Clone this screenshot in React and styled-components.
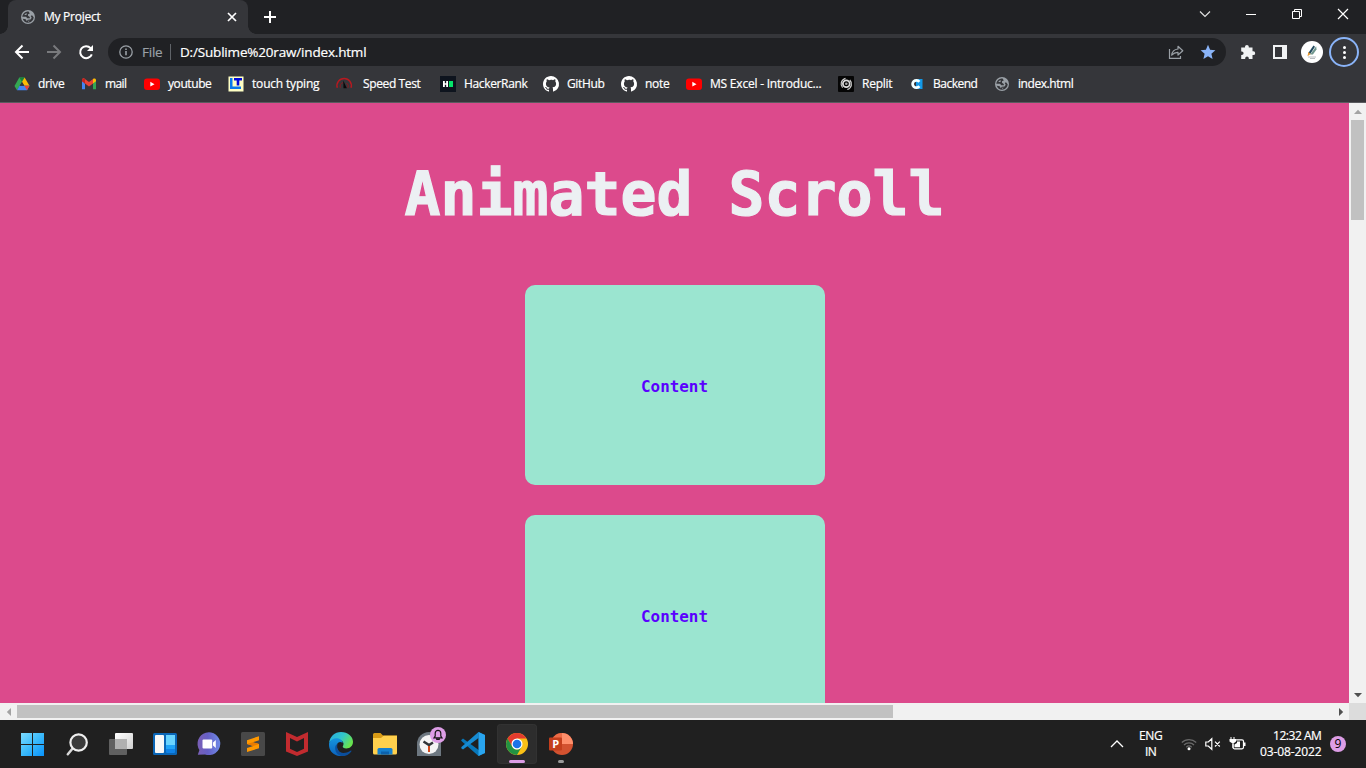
import React, { useLayoutEffect, useRef, useState } from "react";
import styled, { createGlobalStyle } from "styled-components";

const GlobalStyle = createGlobalStyle`
  * { box-sizing: border-box; }
  body {
    margin: 0;
    overflow: hidden;
    font-family: "Open Sans", "Noto Sans", sans-serif;
    font-size: 12px;
    color: #fff;
  }
  svg { display: block; flex: none; overflow: visible; }
`;

const Screen = styled.div`
  width: 1366px;
  height: 768px;
  display: flex;
  flex-direction: column;
  overflow: hidden;
  background: #202124;
`;

/* ---------- fitted text ---------- */
const TextLine = styled.span`
  display: block;
  flex: none;
  white-space: pre;
  width: ${(p) => p.$width}px;
  font-size: ${(p) => p.$size || 12}px;
  line-height: 16px;
  color: ${(p) => p.$color || "#fff"};
  -webkit-text-stroke: 0.2px currentColor;
`;

function Label({ width, size, color, children }) {
  const ref = useRef(null);
  const [spacing, setSpacing] = useState(0);
  useLayoutEffect(() => {
    const natural = ref.current.getBoundingClientRect().width;
    setSpacing((width - 0.6 - natural) / String(children).length);
  }, [width, children]);
  return (
    <TextLine $width={width} $size={size} $color={color}>
      <span ref={ref} style={{ letterSpacing: spacing }}>{children}</span>
    </TextLine>
  );
}

/* ---------- tab strip ---------- */
const TabStrip = styled.div`
  height: 34px;
  flex: none;
  display: flex;
  align-items: stretch;
  padding-left: 8px;
  background: #202124;
`;

const Tab = styled.div`
  position: relative;
  width: 240px;
  display: flex;
  align-items: center;
  padding: 0 9px 0 12px;
  background: #35363a;
  border-radius: 8px 8px 0 0;
  &::before,
  &::after {
    content: "";
    position: absolute;
    bottom: 0;
    width: 8px;
    height: 8px;
  }
  &::before {
    left: -8px;
    background: radial-gradient(circle at 0 0, #202124 7.5px, #35363a 8px);
  }
  &::after {
    right: -8px;
    background: radial-gradient(circle at 100% 0, #202124 7.5px, #35363a 8px);
  }
`;

const TabTitle = styled.div`
  flex: 1;
  padding-left: 8px;
`;

const NewTab = styled.div`
  display: flex;
  align-items: center;
  padding-left: 16px;
`;

const WindowControls = styled.div`
  margin-left: auto;
  display: flex;
  height: 28px;
`;

const WindowButton = styled.div`
  width: 46px;
  display: flex;
  align-items: center;
  justify-content: center;
`;

/* ---------- toolbar ---------- */
const Toolbar = styled.div`
  height: 36px;
  flex: none;
  display: flex;
  align-items: center;
  background: #35363a;
`;

const NavButtons = styled.div`
  width: 108px;
  display: flex;
  gap: 16px;
  padding-left: 14px;
`;

const AddressBar = styled.div`
  width: 1118px;
  height: 28px;
  border-radius: 14px;
  display: flex;
  align-items: center;
  padding: 0 10px;
  background: #202124;
`;

const Divider = styled.div`
  width: 1px;
  height: 16px;
  margin: 0 9px 0 7px;
  background: #5f6368;
`;

const SchemeLabel = styled.div`
  padding-left: 8px;
`;

const AddressActions = styled.div`
  margin-left: auto;
  display: flex;
  align-items: center;
  gap: 16px;
`;

const ToolbarActions = styled.div`
  flex: 1;
  display: flex;
  align-items: center;
  padding-left: 13px;
`;

const ActionSlot = styled.div`
  width: 32px;
  display: flex;
  justify-content: center;
  margin-left: ${(p) => p.$before || 0}px;
`;

const PageAvatar = styled.div`
  width: 22px;
  height: 22px;
  border-radius: 50%;
  background: #fff;
  display: flex;
  align-items: center;
  justify-content: center;
`;

const MenuRing = styled.div`
  width: 30px;
  height: 30px;
  flex: none;
  border-radius: 50%;
  border: 2px solid #8ab4f8;
  display: flex;
  flex-direction: column;
  align-items: center;
  justify-content: center;
  gap: 2px;
`;

const Dot = styled.i`
  width: 3px;
  height: 3px;
  border-radius: 50%;
  background: #fff;
`;

/* ---------- bookmarks ---------- */
const Bookmarks = styled.div`
  height: 33px;
  flex: none;
  display: flex;
  padding: 6px 0 0 14px;
  background: #35363a;
  border-bottom: 1px solid #5a5b5f;
`;

const Bookmark = styled.div`
  width: ${(p) => p.$cell}px;
  height: 16px;
  flex: none;
  display: flex;
  align-items: center;
  gap: 8px;
`;

/* ---------- page ---------- */
const Viewport = styled.div`
  height: 617px;
  flex: none;
  display: grid;
  grid-template-columns: 1349px 17px;
  grid-template-rows: 600px 17px;
`;

const Page = styled.main`
  overflow: hidden;
  background: #dc4a8c;
  display: flex;
  flex-direction: column;
  align-items: center;
`;

const Title = styled.h1`
  margin: 51px 0;
  font: bold 59.8px/80px "DejaVu Sans Mono", monospace;
  color: #ecf0f3;
  white-space: pre;
  -webkit-text-stroke: 1.2px currentColor;
`;

const Card = styled.section`
  width: 300px;
  height: 200px;
  flex: none;
  margin-bottom: 30px;
  border-radius: 10px;
  background: #9be5d0;
  display: flex;
  align-items: center;
  justify-content: center;
`;

const CardText = styled.h2`
  margin: 0;
  padding-top: 3px;
  font: bold 15.9px/22px "DejaVu Sans Mono", monospace;
  color: #5a00ff;
`;

const VerticalBar = styled.div`
  background: #f1f1f1;
  display: flex;
  flex-direction: column;
  align-items: center;
`;

const HorizontalBar = styled.div`
  background: #f1f1f1;
  display: flex;
  align-items: center;
`;

const ArrowBox = styled.div`
  width: 17px;
  height: 17px;
  flex: none;
  display: flex;
  align-items: center;
  justify-content: center;
`;

const Thumb = styled.div`
  width: ${(p) => p.$w}px;
  height: ${(p) => p.$h}px;
  background: #c1c1c1;
`;

const Spacer = styled.div`
  flex: 1;
`;

const Corner = styled.div`
  background: #dcdcdc;
`;

/* ---------- taskbar ---------- */
const Taskbar = styled.footer`
  height: 48px;
  flex: none;
  display: flex;
  align-items: center;
  padding-left: 11px;
  background: #202020;
`;

const AppButton = styled.div`
  position: relative;
  width: 40px;
  height: 40px;
  margin: 0 2px;
  flex: none;
  border-radius: 4px;
  display: flex;
  align-items: center;
  justify-content: center;
  background: ${(p) => (p.$active ? "#2d2d2d" : "transparent")};
  box-shadow: ${(p) => (p.$active ? "inset 0 0 0 1px #323232" : "none")};
`;

const Indicator = styled.i`
  position: absolute;
  bottom: 1px;
  width: ${(p) => p.$w}px;
  height: 3px;
  border-radius: 2px;
  background: ${(p) => p.$color};
`;

const AlarmBadge = styled.div`
  position: absolute;
  top: 3px;
  right: 3px;
  width: 16px;
  height: 16px;
  border-radius: 50%;
  background: #dd9de6;
  display: flex;
  align-items: center;
  justify-content: center;
`;

const Tray = styled.div`
  margin-left: auto;
  height: 48px;
  display: flex;
  align-items: center;
`;

const Stack = styled.div`
  display: flex;
  flex-direction: column;
  align-items: ${(p) => p.$align};
  width: ${(p) => p.$w}px;
`;

const Language = styled.div`
  margin: 0 18px 0 16px;
`;

const TrayIcons = styled.div`
  display: flex;
  align-items: center;
  gap: 8px;
  margin-right: 13px;
`;

const Count = styled.div`
  width: 16px;
  height: 16px;
  margin: 0 20px 0 8px;
  border-radius: 50%;
  background: #dd9de6;
  color: #000;
  font-size: 12px;
  line-height: 16px;
  text-align: center;
`;

/* ---------- icons ---------- */
const Globe = () => (
  <svg width="16" height="16" viewBox="0 0 16 16">
    <circle cx="8" cy="8" r="7" fill="#9aa0a6" />
    <path d="M8.600 2.400C5.300 2.200 2.600 4.500 2.300 7.700H6L7.300 9.300H9.800V8L8 6.800V5.200L9.800 4.600ZM2.800 9.800C3.500 12.300 5.500 13.700 8 13.700 11.200 13.700 13.500 11.400 13.700 8.300L12 6.300 10.700 7.100 11.700 8.800 10.500 10.500 7.900 10.800 6.800 12.300 5.700 10.300Z" fill="#35363a" />
    <path d="M6 4.200 7 4.800 6.300 6.100H4.200ZM8.200 11.800 9.800 11.700 8.200 13Z" fill="#9aa0a6" />
  </svg>
);

const Drive = () => (
  <svg width="16" height="16" viewBox="0 0 16 16">
    <path d="M5.3 1.5h5.3L5.6 10 3 14.3.5 10Z" fill="#34a853" />
    <path d="M5.3 1.5h5.3L8 6Z" fill="#188038" />
    <path d="m10.6 1.5 4.9 8.3h-5.2L8 6Z" fill="#fbbc04" />
    <path d="M5.5 9.8h10L13 14.3H3Z" fill="#4285f4" />
    <path d="M10.3 9.8h5.2L13 14.3Z" fill="#ea4335" />
    <path d="M8 6 5.7 9.8h4.6Z" fill="#35363a" />
  </svg>
);

const Gmail = () => (
  <svg width="16" height="16" viewBox="0 0 16 16">
    <path d="M1 4v9.2h3V7.5Z" fill="#4285f4" />
    <path d="M15 4v9.2h-3V7.5Z" fill="#34a853" />
    <path d="M1 5.3V4c0-1.6 1.6-2 2.6-1.3L8 6l4.4-3.3v4.5L8 10.5 4 7.5Z" fill="#ea4335" />
    <path d="M12 3c1.4-1 3-.4 3 1v1.3l-3 2.2Z" fill="#fbbc04" />
    <path d="M1 4c0-1.4 1.6-2 3-1v4.5L1 5.3Z" fill="#c5221f" />
  </svg>
);

const YouTube = () => (
  <svg width="16" height="16" viewBox="0 0 16 16">
    <rect y="2.5" width="16" height="11.4" rx="3" fill="#f00" />
    <path d="m6.3 5.8 4.2 2.4-4.2 2.4Z" fill="#fff" />
  </svg>
);

const TypingLogo = () => (
  <svg width="16" height="16" viewBox="0 0 16 16">
    <rect x=".5" y=".5" width="15" height="15" fill="#ffffc4" />
    <path d="M2 2h2.500v8.500H13V13H2Z" fill="#0879ec" />
    <path d="M6 2h8v2.500h-2.700V9.500H8.700v-5H6Z" fill="#0009d9" />
  </svg>
);

const Gauge = () => (
  <svg width="19" height="16" viewBox="0 0 19 16">
    <path d="M1.3 11.8A7.2 7.2 0 1 1 15 11.8" fill="none" stroke="#b71920" strokeWidth="1.5" />
    <path d="M4.3 11.8A4.2 4.2 0 0 1 7 6.6M10.5 7A4 4 0 0 1 12 11.8" fill="none" stroke="#8e151b" />
    <path d="m7.3 4.5 3.5 7.7H7.5Z" fill="#08080a" />
  </svg>
);

const HackerRank = () => (
  <svg width="16" height="16" viewBox="0 0 16 16">
    <path fill="#0e141e" d="M0 0h16v16H0z" />
    <path d="M3 5h1.8v2.2h1.4V5H8v6H6.200V8.8H4.800V11H3Z" fill="#fff" />
    <path fill="#05e56a" d="M9 5h4v6H9z" />
  </svg>
);

const GitHub = () => (
  <svg width="16" height="16" viewBox="0 0 16 16">
    <path fill="#fff" d="M8 0C3.58 0 0 3.58 0 8c0 3.54 2.29 6.53 5.47 7.59.4.07.55-.17.55-.38v-1.49c-2.01.37-2.53-.49-2.69-.94-.09-.23-.48-.94-.82-1.13-.28-.15-.68-.52-.01-.53.63-.01 1.08.58 1.23.82.72 1.21 1.87.87 2.33.66.07-.52.28-.87.51-1.07-1.78-.2-3.64-.89-3.64-3.95 0-.87.31-1.59.82-2.15-.08-.2-.36-1.02.08-2.12 0 0 .67-.21 2.2.82A7.6 7.6 0 0 1 8 3.86c.68 0 1.36.09 2 .27 1.53-1.04 2.2-.82 2.2-.82.44 1.1.16 1.92.08 2.12.51.56.82 1.27.82 2.15 0 3.07-1.87 3.75-3.65 3.95.29.25.54.73.54 1.48v2.2c0 .21.15.46.55.38A8 8 0 0 0 8 0Z" />
  </svg>
);

const Replit = () => (
  <svg width="16" height="16" viewBox="0 0 16 16">
    <rect width="16" height="16" rx="1" fill="#050505" />
    <circle cx="8.300" cy="7.800" r="3.400" fill="none" stroke="#dcdcdc" strokeWidth="1.800" />
    <path d="M4.600 11.700C1.800 8.600 3 3.600 7.500 2.300M11.800 4C14.700 7 13.800 12 9.300 13.500" fill="none" stroke="#cfcfcf" strokeWidth="1.200" />
    <circle cx="8.300" cy="7.800" r="1.300" fill="#aaa" />
  </svg>
);

const BackendLogo = () => (
  <svg width="16" height="16" viewBox="0 0 16 16">
    <path fill="#1299e8" d="M7 3h6.500v10H7z" />
    <path d="M10.300 5.800A3.700 3.700 0 1 0 10.300 10.200" fill="none" stroke="#f5ffff" strokeWidth="2.800" />
  </svg>
);

const Stroke = ({ w = 16, h = 16, color = "#fff", sw = 2, d }) => (
  <svg width={w} height={h} viewBox={`0 0 ${w} ${h}`} fill="none" stroke={color} strokeWidth={sw}>
    <path d={d} />
  </svg>
);

const Reload = () => (
  <svg width="16" height="16" viewBox="0 0 16 16">
    <path d="M13.800 10.3A6 6 0 1 1 12.600 4.100" fill="none" stroke="#fff" strokeWidth="2" />
    <path d="M15 1v6H9Z" fill="#fff" />
  </svg>
);

const Info = () => (
  <svg width="16" height="16" viewBox="0 0 16 16">
    <circle cx="8" cy="8" r="6.2" fill="none" stroke="#9aa0a6" strokeWidth="1.3" />
    <path d="M7.2 7h1.6v4.2H7.2zM7.2 4.5h1.6V6H7.2z" fill="#9aa0a6" />
  </svg>
);

const Share = () => (
  <svg width="16" height="16" viewBox="0 0 16 16" fill="none" stroke="#9aa0a6" strokeWidth="1.2">
    <path d="M1.5 5v9.4h11V12" />
    <path d="M10 2.3 14.8 6.7 10 11V8.3C7.2 8.2 5.4 9.2 3.7 11.2 4 8 6 5.5 10 5Z" strokeLinejoin="round" />
  </svg>
);

const Star = () => (
  <svg width="16" height="16" viewBox="0 0 16 16">
    <path d="m8 .8 2.1 5 5.3.5-4 3.5 1.2 5.2L8 12.2 3.4 15l1.2-5.2-4-3.5 5.3-.5Z" fill="#8ab4f8" />
  </svg>
);

const Puzzle = () => (
  <svg width="16" height="16" viewBox="0 0 16 16">
    <path d="M1.2 3.5H5V2.8a1.9 1.9 0 0 1 3.8 0v.7h3.7v3.8h.8a1.9 1.9 0 0 1 0 3.8h-.8v3.8H8.8v-.7a1.8 1.8 0 0 0-3.6 0v.7h-4V11h.6a1.8 1.8 0 0 0 0-3.6h-.6Z" fill="#f1f3f4" />
  </svg>
);

const SidePanel = () => (
  <svg width="14" height="14" viewBox="0 0 14 14">
    <path fillRule="evenodd" d="M0 0h14v14H0ZM2 2v10h7V2Z" fill="#f1f3f4" />
  </svg>
);

const Pen = () => (
  <svg width="14" height="16" viewBox="0 0 14 16">
    <path d="m3.300 9 5.200-7.500 1.500 1.300-4.900 7.500Z" fill="#244c60" />
    <path d="m5.2 10.6 6-8.300.3 3.300-3.600 4.900Z" fill="#6f958c" />
    <path d="m3.3 8 2.400 2-3.200 2.300Z" fill="#e6972e" />
    <path d="M3 13h8M5 14.5h5" stroke="#b9bcc0" />
  </svg>
);

const Arrow = ({ turn = 0, color = "#505050" }) => (
  <svg width="8" height="8" viewBox="0 0 8 8">
    <path d="M0 6 4 1.800 8 6Z" fill={color} transform={`rotate(${turn} 4 4)`} />
  </svg>
);

const Windows = () => (
  <svg width="24" height="24" viewBox="0 0 24 24">
    <defs>
      <linearGradient id="win" gradientUnits="userSpaceOnUse" x1="0" y1="0" x2="23" y2="23">
        <stop stopColor="#7fdcff" /><stop offset=".5" stopColor="#3dbcfb" /><stop offset="1" stopColor="#0a93fb" />
      </linearGradient>
    </defs>
    <path d="M0 1h11v11H0zM12 1h11v11H12zM0 13h11v11H0zM12 13h11v11H12z" fill="url(#win)" />
  </svg>
);

const Search = () => (
  <svg width="24" height="24" viewBox="0 0 24 24" fill="none" strokeLinecap="round">
    <path d="m7.800 16.3-5 6" stroke="#d8d8d8" strokeWidth="2.500" />
    <circle cx="13.6" cy="10.500" r="8.200" stroke="#efefef" strokeWidth="2.2" fill="#3b3b3b" />
  </svg>
);

const TaskView = () => (
  <svg width="24" height="24" viewBox="0 0 24 24">
    <defs>
      <linearGradient id="tv" x1="0" y1="0" x2="1" y2="1"><stop stopColor="#fff" /><stop offset="1" stopColor="#cfcfcf" /></linearGradient>
    </defs>
    <rect y="7" width="18" height="16" rx="1" fill="#606060" />
    <rect x="6" y="1" width="18" height="16" rx="1" fill="url(#tv)" />
    <path d="M6 7h12v10H6z" fill="#b0b0b0" />
  </svg>
);

const Widgets = () => (
  <svg width="24" height="24" viewBox="0 0 24 24">
    <rect y="1" width="24" height="22" rx="1.5" fill="#0a66b7" />
    <rect x="2" y="3" width="9" height="18" rx="1" fill="#f8f8f8" />
    <rect x="13" y="3" width="9" height="18" rx="1" fill="#0f83e8" />
    <path d="M13 3h9v10h-9z" fill="#69d4ff" />
    <path d="M13 13h9v4h-9z" fill="#1fa4f8" />
  </svg>
);

const Chat = () => (
  <svg width="24" height="24" viewBox="0 0 24 24">
    <defs>
      <linearGradient id="chat" x1="0" y1="0" x2="1" y2="0"><stop stopColor="#7a5fb5" /><stop offset=".45" stopColor="#6660c6" /><stop offset="1" stopColor="#6f8be8" /></linearGradient>
    </defs>
    <path d="M.8 22.7 2.4 18A11.4 11.4 0 1 1 8 22.4Z" fill="url(#chat)" />
    <rect x="5.5" y="7.5" width="9.7" height="9" rx="1" fill="#fff" />
    <path d="m16 10.6 2.8-2.5v8L16 13.6Z" fill="#fff" />
  </svg>
);

const Sublime = () => (
  <svg width="24" height="24" viewBox="0 0 24 24">
    <rect width="24" height="24" rx="1.5" fill="#484848" />
    <path d="m6 8.2 12-4v4L11.8 10.3 18 12v4.2L6 20v-4l6.3-2.1L6 12Z" fill="#ff9800" />
    <path d="m6 12 6.3 1.9L18 12l-6.2-1.8Z" fill="#e97b00" />
  </svg>
);

const McAfee = () => (
  <svg width="22" height="24" viewBox="0 0 22 24">
    <path d="M0 0 11 5 22 0v19.5L11 24 0 19.5ZM4 6v10.7l7 3.2 7-3.2V6l-7 3.4Z" fillRule="evenodd" fill="#c22b2f" />
  </svg>
);

const Edge = () => (
  <svg width="24" height="24" viewBox="0 0 24 24">
    <defs>
      <linearGradient id="ea" x1="0" y1="0" x2="1" y2=".5"><stop stopColor="#25a9e1" /><stop offset=".55" stopColor="#32c6ca" /><stop offset="1" stopColor="#68e34f" /></linearGradient>
      <linearGradient id="eb" x1="0" y1="0" x2="0" y2="1"><stop stopColor="#1595df" /><stop offset="1" stopColor="#0a62bd" /></linearGradient>
    </defs>
    <path d="M.1 11C.8 4.6 5.7 0 12 0c7 0 12 4.6 12 9.8 0 4-3 6.7-6.7 6.7-2.5 0-4-1-3.5-2.2 1.4-2 1-5-2.4-6C6.5 6.7 2 8 .1 11Z" fill="url(#ea)" />
    <path d="M.1 11c2-5 8-6 11.6-3.5 1.3 1 2 2.1 2 3.2C9 8 6 13 9 18c2 4 6.5 5 10 3.3-5 5-14.3 2.9-17.5-2.7C.2 16.3-.2 13.6.1 11Z" fill="url(#eb)" />
    <path d="M8.5 12c-2 8 5 11.5 13 6.7.9-.4 1.2.2.8.8C17 27 6 24.7 6.2 16c0-2.3 1-3.5 2.3-4Z" fill="#0b4e9c" />
  </svg>
);

const Folder = () => (
  <svg width="24" height="24" viewBox="0 0 24 24">
    <path d="M0 2.5Q0 1 1.5 1h6L10 3.5h14v8H0Z" fill="#d89b16" />
    <path d="M0 6h8l2.5-2.2H24V21q0 1.5-1.5 1.5h-21Q0 22.500 0 21Z" fill="#ffd04d" />
    <path d="M4.500 22.500v-5Q4.500 16 6 16h12q1.500 0 1.500 1.500v5Z" fill="#1580cf" />
    <path d="M8 22.500v-3h8v3Z" fill="#0c61ab" />
  </svg>
);

const Clock = () => (
  <svg width="24" height="24" viewBox="0 0 24 24">
    <path d="M0 24V12A12 12 0 0 1 12 0a12 12 0 0 1 12 12v12Z" fill="#6d7780" />
    <circle cx="12" cy="12.500" r="9.500" fill="#f4f4f4" />
    <path d="m6.500 9.500 5.500 3.500 4-2.500" fill="none" stroke="#303438" strokeWidth="2.500" />
    <path d="M12 14v6" stroke="#d24a1d" strokeWidth="2" />
  </svg>
);

const Bell = () => (
  <Stroke w={10} h={12} color="#151515" sw={1.2} d="M1 8.800h8L7.800 7V4.200a2.800 2.800 0 0 0-5.600 0V7ZM3.800 9v1.300h2.400V9" />
);

const Code = () => (
  <svg width="24" height="24" viewBox="0 0 24 24">
    <path d="M17.500 0 24 3v18l-6.500 3L1 9.500 0 8.200l2-1.800L18 18.300Z" fill="#0877b9" />
    <path d="M17.500 0v6L2 17.600l-2-1.700 1-1.300Z" fill="#168bd2" />
    <path d="M17.500 0 24 3v18l-6.500 3Z" fill="#29a5ef" />
  </svg>
);

const Chrome = () => (
  <svg width="22" height="22" viewBox="0 0 22 22">
    <circle cx="11" cy="11" r="11" fill="#fbc116" />
    <path d="M1.500 5.500A11 11 0 0 1 20.500 5.500H11L6.200 13.800Z" fill="#e33b2e" />
    <path d="M1.500 5.500 6.300 13.700A5.500 5.500 0 0 0 15.700 13.800L11 22A11 11 0 0 1 1.500 5.500Z" fill="#229342" />
    <circle cx="11" cy="11" r="5.500" fill="#fff" />
    <circle cx="11" cy="11" r="4.300" fill="#1a73e8" />
  </svg>
);

const PowerPoint = () => (
  <svg width="24" height="24" viewBox="0 0 24 24">
    <circle cx="13" cy="12" r="11" fill="#d35230" />
    <path d="M13 1a11 11 0 0 1 11 11H13Z" fill="#ff8f6b" />
    <path d="M13 1a11 11 0 0 0-11 11h11Z" fill="#ed6c47" />
    <rect y="5.500" width="13" height="13" rx="1" fill="#c43e1c" />
    <text x="3.200" y="16" fill="#fff" fontFamily="Open Sans, sans-serif" fontWeight="bold" fontSize="11">P</text>
  </svg>
);

const Wifi = () => (
  <svg width="16" height="16" viewBox="0 0 16 16" fill="none" stroke="#6a6a6a" strokeWidth="1.200">
    <path d="M.8 6.500a10.300 10.300 0 0 1 14.400 0M3 9a7 7 0 0 1 10 0M5.300 11.200a3.900 3.900 0 0 1 5.400 0" />
    <circle cx="8" cy="12.700" r="1.500" fill="#fff" stroke="none" />
  </svg>
);

const Mute = () => <Stroke d="M.800 6h2.500L6.800 2.700v10.600L3.300 10H.800ZM10 5.700l4.800 4.800M14.800 5.700 10 10.500" sw={1.200} />;

const Battery = () => (
  <svg width="17" height="16" viewBox="0 0 17 16">
    <path d="M6 3.800H13q1.500 0 1.500 1.500v6Q14.500 12.800 13 12.800H5.500Q4 12.800 4 11.300V8" fill="none" stroke="#fff" strokeWidth="1.200" />
    <path d="M8 5.500H11v5.800H5.500V8.600L8 7ZM15 6.500h1.500v3.500H15ZM1.500 1h1v2h2V1h1v2H7v2.500L4.500 7.500V12h-1V7.500L.500 5.500V3h1Z" fill="#fff" />
  </svg>
);

const BOOKMARKS = [
  { text: "drive", icon: <Drive />, cell: 67, width: 27 },
  { text: "mail", icon: <Gmail />, cell: 63, width: 22 },
  { text: "youtube", icon: <YouTube />, cell: 84, width: 44 },
  { text: "touch typing", icon: <TypingLogo />, cell: 108, width: 68 },
  { text: "Speed Test", icon: <Gauge />, cell: 104, width: 58 },
  { text: "HackerRank", icon: <HackerRank />, cell: 103, width: 64 },
  { text: "GitHub", icon: <GitHub />, cell: 78, width: 38 },
  { text: "note", icon: <GitHub />, cell: 65, width: 25 },
  { text: "MS Excel - Introduc...", icon: <YouTube />, cell: 152, width: 112 },
  { text: "Replit", icon: <Replit />, cell: 71, width: 31 },
  { text: "Backend", icon: <BackendLogo />, cell: 85, width: 45 },
  { text: "index.html", icon: <Globe />, cell: 90, width: 56 },
];

const APPS = [Windows, Search, TaskView, Widgets, Chat, Sublime, McAfee, Edge, Folder];

export default function App() {
  return (
    <Screen>
      <GlobalStyle />
      <TabStrip>
        <Tab>
          <Globe />
          <TabTitle><Label width={57}>My Project</Label></TabTitle>
          <Stroke w={14} h={14} sw={1.700} d="m3 3 8 8m0-8-8 8" />
        </Tab>
        <NewTab><Stroke w={12} h={12} d="M6 0v12M0 6h12" /></NewTab>
        <WindowControls>
          <WindowButton><Stroke w={12} h={12} sw={1.200} color="#e0e0e0" d="m1 3.500 5 5 5-5" /></WindowButton>
          <WindowButton><Stroke w={10} h={10} sw={1} d="M0 5.500h10" /></WindowButton>
          <WindowButton><Stroke w={10} h={10} sw={1} d="M.500 2.500h7v7h-7ZM2.500 2.500v-2h7v7h-2" /></WindowButton>
          <WindowButton><Stroke w={10} h={10} sw={1.200} d="m0 0 10 10m0-10L0 10" /></WindowButton>
        </WindowControls>
      </TabStrip>
      <Toolbar>
        <NavButtons>
          <Stroke d="M15 8H2.500M8.500 1.500 2 8l6.500 6.500" />
          <Stroke color="#797a7d" d="M1 8h12.500M7.500 1.500 14 8l-6.500 6.500" />
          <Reload />
        </NavButtons>
        <AddressBar>
          <Info />
          <SchemeLabel><Label width={21} size={13.500} color="#9aa0a6">File</Label></SchemeLabel>
          <Divider />
          <Label width={187} size={13.500}>D:/Sublime%20raw/index.html</Label>
          <AddressActions><Share /><Star /></AddressActions>
        </AddressBar>
        <ToolbarActions>
          <ActionSlot $before={-7}><Puzzle /></ActionSlot>
          <ActionSlot><SidePanel /></ActionSlot>
          <ActionSlot><PageAvatar><Pen /></PageAvatar></ActionSlot>
          <ActionSlot><MenuRing><Dot /><Dot /><Dot /></MenuRing></ActionSlot>
        </ToolbarActions>
      </Toolbar>
      <Bookmarks>
        {BOOKMARKS.map((b) => (
          <Bookmark key={b.text} $cell={b.cell}>
            {b.icon}
            <Label width={b.width}>{b.text}</Label>
          </Bookmark>
        ))}
      </Bookmarks>
      <Viewport>
        <Page>
          <Title>Animated Scroll</Title>
          <Card><CardText>Content</CardText></Card>
          <Card><CardText>Content</CardText></Card>
        </Page>
        <VerticalBar>
          <ArrowBox><Arrow color="#a3a3a3" /></ArrowBox>
          <Thumb $w={13} $h={100} />
          <Spacer />
          <ArrowBox><Arrow turn={180} /></ArrowBox>
        </VerticalBar>
        <HorizontalBar>
          <ArrowBox><Arrow turn={-90} color="#a3a3a3" /></ArrowBox>
          <Thumb $w={876} $h={13} />
          <Spacer />
          <ArrowBox><Arrow turn={90} /></ArrowBox>
        </HorizontalBar>
        <Corner />
      </Viewport>
      <Taskbar>
        {APPS.map((Icon, i) => (
          <AppButton key={i}><Icon /></AppButton>
        ))}
        <AppButton><Clock /><AlarmBadge><Bell /></AlarmBadge></AppButton>
        <AppButton><Code /></AppButton>
        <AppButton $active><Chrome /><Indicator $w={16} $color="#dd9de6" /></AppButton>
        <AppButton><PowerPoint /><Indicator $w={6} $color="#9a9a9a" /></AppButton>
        <Tray>
          <Stroke w={12} h={12} sw={1.300} d="m0 9 6-6 6 6" />
          <Language>
            <Stack $w={24} $align="center">
              <Label width={24}>ENG</Label>
              <Label width={12}>IN</Label>
            </Stack>
          </Language>
          <TrayIcons>
            <Wifi /><Mute /><Battery />
          </TrayIcons>
          <Stack $w={63} $align="flex-end">
            <Label width={49}>12:32 AM</Label>
            <Label width={62}>03-08-2022</Label>
          </Stack>
          <Count>9</Count>
        </Tray>
      </Taskbar>
    </Screen>
  );
}
